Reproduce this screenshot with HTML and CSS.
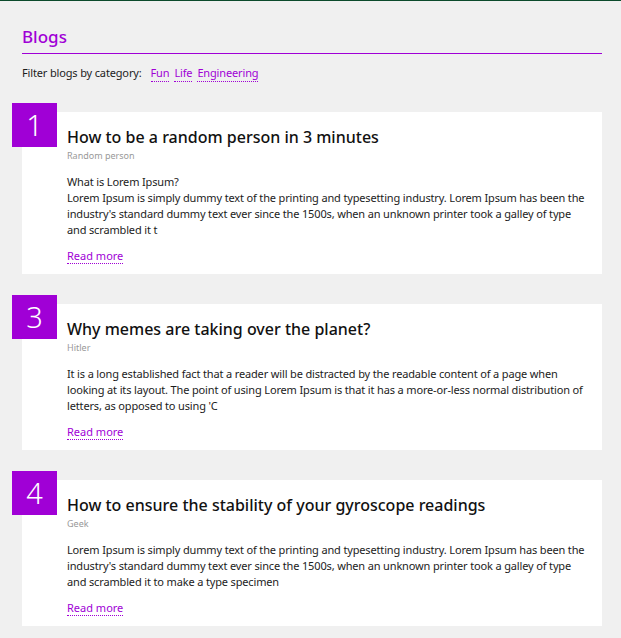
FILE: index.html
```html
<!DOCTYPE html>
<html lang="en">
<head>
<meta charset="utf-8">
<title>Blogs</title>
<link rel="stylesheet" href="styles.css">
</head>
<body>
<div class="page">
  <h1 class="page-title">Blogs</h1>
  <div class="filter">
    <span class="filter-label">Filter blogs by category:</span>
    <a class="filter-link" href="#">Fun</a>
    <a class="filter-link" href="#">Life</a>
    <a class="filter-link" href="#">Engineering</a>
  </div>

  <div class="posts">
    <article class="post">
      <div class="post-num">1</div>
      <h2 class="post-title">How to be a random person in 3 minutes</h2>
      <div class="post-author">Random person</div>
      <p class="post-body">What is Lorem Ipsum?<br>Lorem Ipsum is simply dummy text of the printing and typesetting industry. Lorem Ipsum has been the industry's standard dummy text ever since the 1500s, when an unknown printer took a galley of type and scrambled it t</p>
      <a class="read-more" href="#">Read more</a>
    </article>

    <article class="post">
      <div class="post-num">3</div>
      <h2 class="post-title">Why memes are taking over the planet?</h2>
      <div class="post-author">Hitler</div>
      <p class="post-body">It is a long established fact that a reader will be distracted by the readable content of a page when looking at its layout. The point of using Lorem Ipsum is that it has a more-or-less normal distribution of letters, as opposed to using 'C</p>
      <a class="read-more" href="#">Read more</a>
    </article>

    <article class="post">
      <div class="post-num">4</div>
      <h2 class="post-title">How to ensure the stability of your gyroscope readings</h2>
      <div class="post-author">Geek</div>
      <p class="post-body">Lorem Ipsum is simply dummy text of the printing and typesetting industry. Lorem Ipsum has been the industry's standard dummy text ever since the 1500s, when an unknown printer took a galley of type and scrambled it to make a type specimen</p>
      <a class="read-more" href="#">Read more</a>
    </article>
  </div>
</div>
</body>
</html>
```
FILE: styles.css
```css
html, body {
  margin: 0;
  padding: 0;
}
body {
  background: #f0f0f0;
  border-top: 1px solid #0b4a2b;
  font-family: "Noto Sans", "DejaVu Sans", sans-serif;
  color: #1c1c1c;
}
.page {
  padding: 0 19px 20px 22px;
}
.page-title {
  margin: 26px 0 0;
  padding-bottom: 6px;
  font-size: 17px;
  line-height: 20px;
  font-weight: 500;
  color: #a000d6;
  border-bottom: 1px solid #a000d6;
}
.filter {
  margin-top: 11px;
  font-size: 11px;
  line-height: 16px;
  letter-spacing: -0.15px;
  display: flex;
  align-items: baseline;
  gap: 5px;
}
.filter-label {
  margin-right: 4px;
}
.filter-link,
.read-more {
  color: #a000d6;
  text-decoration: none;
  border-bottom: 1px dotted #a000d6;
}
.posts {
  margin-top: 30px;
  display: flex;
  flex-direction: column;
  gap: 30px;
}
.post {
  position: relative;
  background: #fff;
  padding: 16px 10px 10px 45px;
}
.post-num {
  position: absolute;
  left: -10px;
  top: -9px;
  width: 45px;
  height: 44px;
  background: #a000d6;
  color: #fff;
  font-size: 29px;
  font-weight: 300;
  line-height: 44px;
  text-align: center;
}
.post-title {
  margin: 0;
  font-size: 16px;
  line-height: 18px;
  font-weight: 500;
  color: #111;
}
.post-author {
  margin-top: 4px;
  font-size: 9px;
  line-height: 12px;
  color: #999;
}
.post-body {
  margin: 12px 0 0;
  font-size: 11px;
  line-height: 16px;
  letter-spacing: -0.15px;
}
.read-more {
  display: block;
  width: max-content;
  margin-top: 11px;
  font-size: 11px;
  line-height: 14px;
}
```
